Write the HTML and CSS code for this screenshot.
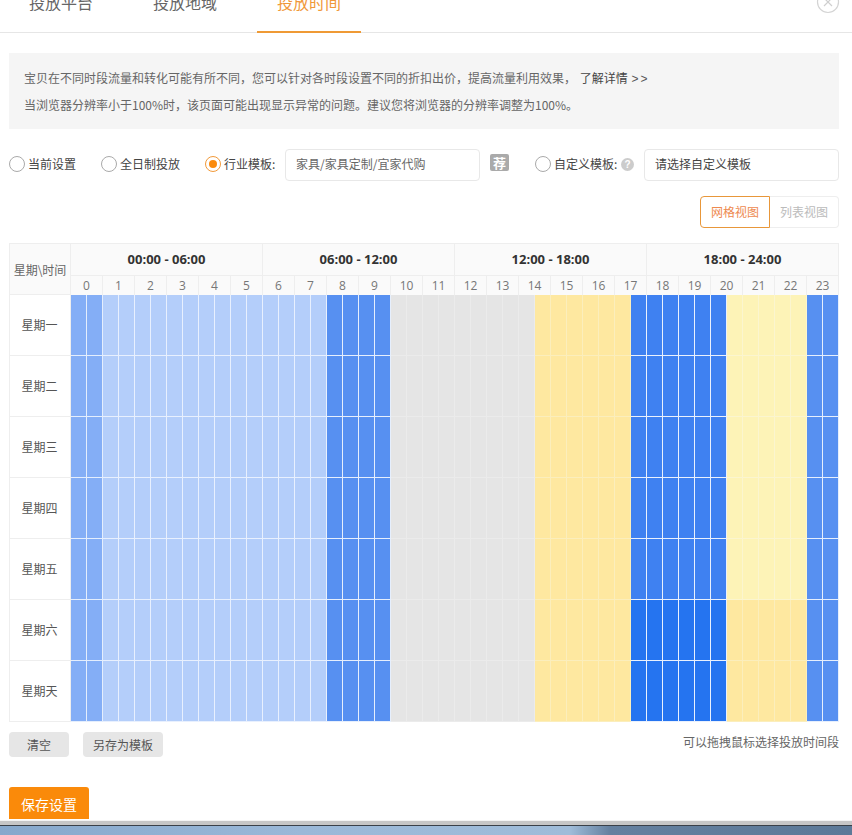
FILE: index.html
```html
<!DOCTYPE html>
<html lang="zh-CN">
<head>
<meta charset="utf-8">
<title>投放时间</title>
<link rel="stylesheet" href="styles.css">
</head>
<body>
<div class="page">
  <nav class="tabs">
    <a class="tab">投放平台</a>
    <a class="tab">投放地域</a>
    <a class="tab active">投放时间</a>
    <svg class="close" viewBox="0 0 24 24" width="24" height="24"><circle cx="12" cy="12" r="10.5" fill="none" stroke="#d4d4d4" stroke-width="1.2"/><path d="M8 8l8 8M16 8l-8 8" stroke="#cfcfcf" stroke-width="1.2" fill="none"/></svg>
  </nav>

  <section class="notice">
    <p>宝贝在不同时段流量和转化可能有所不同，您可以针对各时段设置不同的折扣出价，提高流量利用效果， <a class="more">了解详情</a> <span class="arrows">&gt;&gt;</span></p>
    <p>当浏览器分辨率小于100%时，该页面可能出现显示异常的问题。建议您将浏览器的分辨率调整为100%。</p>
  </section>

  <div class="options">
    <label class="radio r1"><i class="dot"></i>当前设置</label>
    <label class="radio r2"><i class="dot"></i>全日制投放</label>
    <label class="radio r3 on"><i class="dot"></i>行业模板:</label>
    <div class="field f1">家具/家具定制/宜家代购</div>
    <span class="rec">荐</span>
    <label class="radio r4"><i class="dot"></i>自定义模板:</label>
    <span class="help">?</span>
    <div class="field f2">请选择自定义模板</div>
  </div>

  <div class="views">
    <a class="view current">网格视图</a><a class="view other">列表视图</a>
  </div>

  <div class="schedule">
    <div class="corner">星期\时间</div>
    <div class="span s1">00:00 - 06:00</div>
    <div class="span s2">06:00 - 12:00</div>
    <div class="span s3">12:00 - 18:00</div>
    <div class="span s4">18:00 - 24:00</div>
    <div class="hours" id="hours"></div>
    <div class="days" id="days"></div>
    <div class="cells" id="cells"></div>
  </div>

  <div class="actions">
    <a class="btn clear">清空</a>
    <a class="btn saveas">另存为模板</a>
    <span class="hint">可以拖拽鼠标选择投放时间段</span>
  </div>

  <a class="save">保存设置</a>
</div>
<div class="desktop"></div>
<script src="grid.js"></script>
</body>
</html>
```

FILE: styles.css
```css
* { box-sizing: border-box; }
html, body { margin: 0; padding: 0; height: 835px; overflow: hidden; background: #fff; }
body { font: 12px/20px "Noto Sans CJK SC", "Liberation Sans", sans-serif; color: #666; position: relative; }
.page { width: 852px; height: 827px; background: #fff; }
p { margin: 0; }

.tabs { display: flex; gap: 20px; height: 40px; margin-top: -7px; padding-left: 9px; border-bottom: 1px solid #e6e6e6; position: relative; }
.tab { width: 104px; height: 40px; text-align: center; font-size: 16px; line-height: 18px; color: #666; }
.tab.active { color: #f0983a; border-bottom: 2px solid #ef9a35; }
.close { position: absolute; left: 816px; top: -3px; }

.notice { margin: 20px 13px 0 9px; height: 76px; background: #f5f5f5; padding: 15px 15px 0; }
.notice p { line-height: 20px; margin-bottom: 6px; white-space: nowrap; }
.more { color: #444; margin-left: 1px; }
.arrows { letter-spacing: 2px; margin-left: 1px; font-family: "Liberation Sans", sans-serif; color: #555; }

.options { display: flex; align-items: center; height: 32px; margin-top: 20px; padding-left: 9px; }
.radio { display: flex; align-items: center; color: #444; padding-bottom: 3px; }
.dot { width: 16px; height: 16px; border: 1px solid #aaa; border-radius: 50%; margin-right: 3px; background: #fff; }
.on .dot { border-color: #f29a3a; padding: 3px; background: #fb8a0c content-box; }
.r1 { width: 92px; }
.r2 { width: 104px; }
.r3 { width: 80px; }
.field { height: 32px; border: 1px solid #e8e8e8; border-radius: 4px; padding-left: 10px; line-height: 28px; width: 195px; }
.f2 { color: #444; margin-left: 10px; }
.rec { width: 19px; height: 17px; margin: -6px 26px 0 10px; background: #aaa; color: #fff; font-weight: 700; line-height: 17px; text-align: center; border-radius: 2px; font-size: 13px; }
.r4 { width: 86px; }
.help { width: 13px; height: 13px; margin-top: -2px; border-radius: 50%; background: #ccc; color: #fff; font-size: 10px; line-height: 13px; text-align: center; font-family: "Liberation Sans", sans-serif; font-weight: 700; }

.views { display: flex; justify-content: flex-end; margin: 15px 13px 0 0; height: 32px; }
.view { height: 32px; line-height: 30px; text-align: center; border: 1px solid #eee; }
.current { width: 70px; border-color: #e8973a; color: #ee8a50; border-radius: 4px 0 0 4px; }
.other { width: 69px; border-left: 0; color: #bbb; border-radius: 0 4px 4px 0; }

.schedule { display: grid; grid-template-columns: 62px repeat(4, 192px); grid-template-rows: 32px 20px 427px; margin: 15px 0 0 9px; width: 830px; }
.corner { grid-row: 1 / 3; background: #fafafa; border: 1px solid #eee; padding-top: 7px; line-height: 38px; text-align: center; color: #666; white-space: nowrap; }
.span { background: #fafafa; border-top: 1px solid #eee; border-right: 1px solid #eee; text-align: center; font: 700 13px/31px "Open Sans", "Liberation Sans", sans-serif; color: #333; }
.hours { grid-column: 2 / 6; display: grid; grid-template-columns: repeat(24, 32px); background: #fafafa; border-top: 1px solid #eee; }
.hour { border-right: 1px solid #eee; text-align: center; line-height: 19px; color: #777; font-family: "Open Sans", "Liberation Sans", sans-serif; }
.days { display: grid; grid-template-rows: repeat(7, 61px); border-left: 1px solid #eee; }
.day { border-bottom: 1px solid #eee; border-right: 1px solid #eee; text-align: center; line-height: 60px; color: #555; padding-right: 1px; }
.cells { grid-column: 2 / 6; display: grid; grid-template-columns: repeat(48, 16px); grid-template-rows: repeat(7, 61px); }
.c { border-right: 1px solid #fff; border-bottom: 1px solid #fff; }
.a { background: #84aef6; border-color: #e4eefd; }
.b { background: #b4cefa; border-color: #e8f0fe; }
.d { background: #5790f1; border-color: #e6effd; }
.g { background: #e5e5e5; border-color: #ebebeb; }
.y { background: #fee8a0; border-color: #fbeebc; }
.l { background: #fdf3b7; border-color: #fbf5cf; }
.m { background: #3f81f1; border-color: #eaf1fd; }
.v { background: #2574f0; border-color: #e9f1fe; }

.actions { display: flex; align-items: flex-start; margin: 10px 13px 0 9px; height: 25px; }
.btn { height: 25px; line-height: 25px; text-align: center; background: #e6e6e6; color: #555; border-radius: 4px; }
.clear { width: 60px; }
.saveas { width: 80px; margin-left: 14px; }
.hint { margin-left: auto; line-height: 20px; color: #666; }

.save { display: block; width: 80px; height: 32px; margin: 30px 0 0 9px; background: #fa8a0a; color: #fff; border-radius: 3px 3px 0 0; font-size: 14px; line-height: 35px; text-align: center; }

.desktop { height: 15px; background:
  linear-gradient(#f4f4f4 0, #f4f4f4 1px, #c6c6c6 1px, #c6c6c6 5px, #3a4048 5px, #3a4048 6px, transparent 6px),
  linear-gradient(90deg, #86a8cc 0, #9ab8d8 300px, #9fbcd9 570px, #64809f 610px, #5c7998 100%); }
```

FILE: grid.js
```js
var DAYS = ['星期一', '星期二', '星期三', '星期四', '星期五', '星期六', '星期天'];
var WEEK = 'aabbbbbbbbbbbbbbddddggggggggg' + 'yyyyyy' + 'mmmmmm' + 'lllll' + 'dd';
var END  = 'aabbbbbbbbbbbbbbddddggggggggg' + 'yyyyyy' + 'vvvvvv' + 'yyyyy' + 'dd';

var hours = document.getElementById('hours');
for (var h = 0; h < 24; h++) {
  var hour = document.createElement('div');
  hour.className = 'hour';
  hour.textContent = h;
  hours.appendChild(hour);
}

var days = document.getElementById('days');
var cells = document.getElementById('cells');
DAYS.forEach(function (name, i) {
  var day = document.createElement('div');
  day.className = 'day';
  day.textContent = name;
  days.appendChild(day);
  var pattern = i < 5 ? WEEK : END;
  for (var k = 0; k < 48; k++) {
    var cell = document.createElement('div');
    cell.className = 'c ' + pattern.charAt(k);
    cells.appendChild(cell);
  }
});
```
